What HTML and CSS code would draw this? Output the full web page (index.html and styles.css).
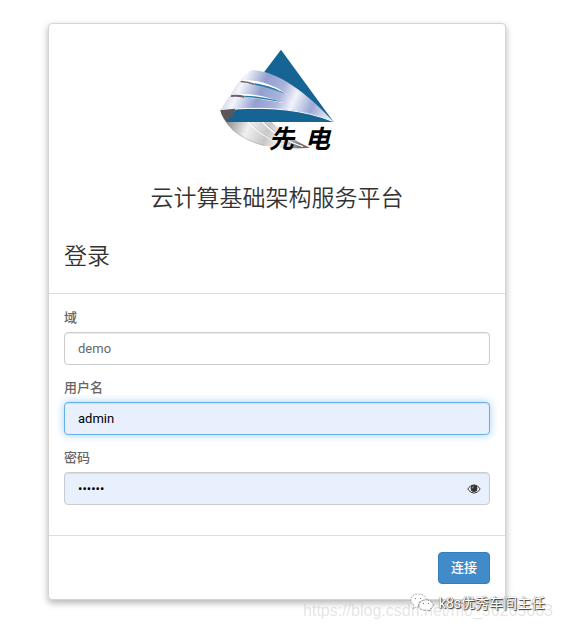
FILE: index.html
```
<!DOCTYPE html>
<html lang="zh-CN">
<head>
  <meta charset="UTF-8">
  <meta name="viewport" content="width=device-width, initial-scale=1.0">
  <title>登录</title>
  <link rel="stylesheet" href="styles.css">
</head>
<body>
  <main class="page">
    <form class="login">
      <div class="login-header">
        <svg class="logo" viewBox="0 0 405 360" role="img" aria-label="先电">
          <defs>
            <linearGradient id="wing" x1="60" y1="110" x2="350" y2="240" gradientUnits="userSpaceOnUse">
              <stop offset="0" stop-color="#c3cae6"/>
              <stop offset="0.13" stop-color="#f4f5fb"/>
              <stop offset="0.32" stop-color="#929fd0"/>
              <stop offset="0.5" stop-color="#a9b3da"/>
              <stop offset="0.64" stop-color="#f1f3fa"/>
              <stop offset="0.82" stop-color="#9da9d5"/>
              <stop offset="1" stop-color="#e4e8f5"/>
            </linearGradient>
            <linearGradient id="shell" x1="50" y1="230" x2="270" y2="320" gradientUnits="userSpaceOnUse">
              <stop offset="0" stop-color="#858585"/>
              <stop offset="0.3" stop-color="#f0f0f0"/>
              <stop offset="0.55" stop-color="#c8c8c8"/>
              <stop offset="0.75" stop-color="#f5f5f5"/>
              <stop offset="1" stop-color="#6c6c6c"/>
            </linearGradient>
          </defs>
          <path fill="url(#shell)" d="M31 211C42 246 67 277 108 299C157 323 226 328 300 323C258 305 219 278 184 245L76 206Z"/>
          <path fill="none" stroke="#fff" stroke-width="4" d="M116 245C143 280 186 304 239 316M157 245C185 277 225 302 279 320"/>
          <path fill="none" stroke="#888" stroke-width="1" d="M34 220C49 262 98 300 164 317M119 245C146 280 187 303 238 314M161 245C190 276 229 300 280 318"/>
          <path fill="#166493" d="M213 29L371 246H50Z"/>
          <path fill="url(#wing)" d="M31 211C62 166 98 94 130 90C205 96 288 156 371 246C290 207 174 198 31 211Z"/>
          <path fill="none" stroke="#fff" stroke-width="3" d="M75 207C180 200 285 210 368 244"/>
          <path fill="#166493" d="M76 211C179 205 278 215 356 246H50Z"/>
          <path fill="#5b5758" d="M31 211L76 206L70 222L50 246Q35 229 31 211Z"/>
          <path fill="#fff" d="M93 120C144 119 192 133 235 166C187 143 145 134 91 128ZM65 164C120 157 173 169 220 190C169 179 117 171 62 171Z"/>
          <path fill="#247aa8" d="M134 130C169 135 202 147 228 162C197 151 166 140 134 135ZM104 167C145 168 181 175 213 186C178 180 143 173 104 172Z"/>
          <path fill="#666469" d="M93 122Q115 123 135 131L132 135Q113 128 91 127ZM64 165Q85 162 105 168L102 173Q82 169 62 171Z"/>
          <text class="logo-text" x="176" y="324">先</text>
          <text class="logo-text" x="284" y="324">电</text>
        </svg>
        <h1 class="title">云计算基础架构服务平台</h1>
        <h2 class="subtitle">登录</h2>
      </div>

      <div class="login-body">
        <div class="field">
          <label for="domain">域</label>
          <input class="control" id="domain" type="text" value="demo">
        </div>
        <div class="field">
          <label for="username">用户名</label>
          <input class="control filled active" id="username" type="text" value="admin">
        </div>
        <div class="field">
          <label for="password">密码</label>
          <div class="password">
            <input class="control filled" id="password" type="password" value="123456">
            <button class="reveal" type="button" aria-label="显示密码">
              <svg viewBox="0 0 14 10">
                <path fill="#fff" stroke="#333" stroke-width="1" d="M.8 5Q3.200 .9 7 .9T13.200 5Q10.800 9.100 7 9.100T.8 5Z"/>
                <circle cx="7" cy="4.500" r="3.400" fill="#333"/>
                <path fill="none" stroke="#ddd" stroke-width=".6" d="M5.200 4.500Q5.200 2.700 7 2.700"/>
              </svg>
            </button>
          </div>
        </div>
      </div>

      <div class="login-footer">
        <button class="connect" type="button">连接</button>
      </div>
    </form>

    <div class="source-url">https://blog.csdn.net/m0_56265663</div>
    <div class="account">
      <svg class="chat-icon" viewBox="0 0 26 20">
        <path fill="#fff" stroke="#999" stroke-width=".8" stroke-dasharray="2 1" d="M4 16L5 12C-1 8 2 1 9 1C15 1 18 4 17 8C11 7 8 10 10 14L7 14Z"/>
        <path fill="#fff" stroke="#777" stroke-width=".8" stroke-dasharray="3 1" d="M21 18L18 17C12 18 9 15 10 11C12 6 21 5 24 11C25 14 23 15 21 16Z"/>
        <path fill="#777" d="M6 5h1v1H6zM11 5h1v1h-1zM14 10h1v1h-1zM19 10h1v1h-1z"/>
      </svg>
      <span>k8s优秀车间主任</span>
    </div>
  </main>
</body>
</html>
```
FILE: styles.css
```
* {
  box-sizing: border-box;
}

body {
  margin: 0;
  background-color: #fff;
  color: #333;
  font-family: Roboto, "Noto Sans CJK SC", sans-serif;
  font-size: 13px;
  line-height: 18px;
}

.page {
  position: relative;
  padding: 23px 56px 28px 48px;
}

.login {
  background-color: #fff;
  border: 1px solid #d5d5d5;
  border-radius: 4px;
  box-shadow: 0 3px 7px rgba(0, 0, 0, 0.3);
}

.login-header {
  padding: 16px 15px 23px;
  border-bottom: 1px solid #ddd;
}

.logo {
  display: block;
  width: 135px;
  height: 120px;
  margin: 0 auto;
}

.logo-text {
  fill: #000;
  font-family: "Noto Sans CJK SC", sans-serif;
  font-size: 76px;
  font-style: italic;
  font-weight: 700;
}

.title,
.subtitle {
  margin: 0;
  font-size: 23px;
  font-weight: 350;
  line-height: 26px;
}

.title {
  margin-top: 26px;
  text-align: center;
}

.subtitle {
  margin-top: 32px;
}

.login-body {
  padding: 15px 15px 30px;
}

.field + .field {
  margin-top: 14px;
}

label {
  display: block;
  margin-bottom: 5px;
  color: #666;
  font-weight: 500;
}

.control {
  display: block;
  width: 100%;
  height: 33px;
  padding: 6px 13px;
  border: 1px solid #ccc;
  border-radius: 4px;
  background-color: #fff;
  box-shadow: inset 0 1px 1px rgba(0, 0, 0, 0.08);
  color: #666;
  font: inherit;
}

.filled {
  background-color: #e8f0fe;
  color: #000;
}

.active,
.control:focus {
  border-color: #66afe9;
  outline: none;
  box-shadow: inset 0 1px 1px rgba(0, 0, 0, 0.08), 0 0 8px rgba(102, 175, 233, 0.6);
}

.password {
  position: relative;
}

/* Sits inside the right end of the password box */
.reveal {
  position: absolute;
  top: 0;
  right: 9px;
  display: flex;
  align-items: center;
  height: 33px;
  padding: 0;
  border: none;
  background: none;
  cursor: pointer;
}

.reveal svg {
  width: 14px;
  height: 10px;
}

.login-footer {
  display: flex;
  justify-content: flex-end;
  padding: 16px 15px 15px;
  border-top: 1px solid #ddd;
}

.connect {
  height: 32px;
  padding: 0 12px;
  border: 1px solid #357ebd;
  border-radius: 4px;
  background-color: #428bca;
  color: #fff;
  font: inherit;
  font-weight: 500;
  cursor: pointer;
}

.connect:hover {
  background-color: #3276b1;
}

/* Watermarks over the bottom edge of the card */
.source-url {
  position: absolute;
  right: 9px;
  bottom: 8px;
  color: rgba(120, 120, 120, 0.2);
  font-family: "Liberation Sans", Arial, sans-serif;
  font-size: 16px;
}

.account {
  position: absolute;
  right: 17px;
  bottom: 15px;
  display: flex;
  align-items: center;
  gap: 4px;
  color: #fff;
  font-size: 14px;
  text-shadow: 1px 1px 1px #333, 0 0 1px #555;
}

.chat-icon {
  width: 26px;
  height: 20px;
}
```
